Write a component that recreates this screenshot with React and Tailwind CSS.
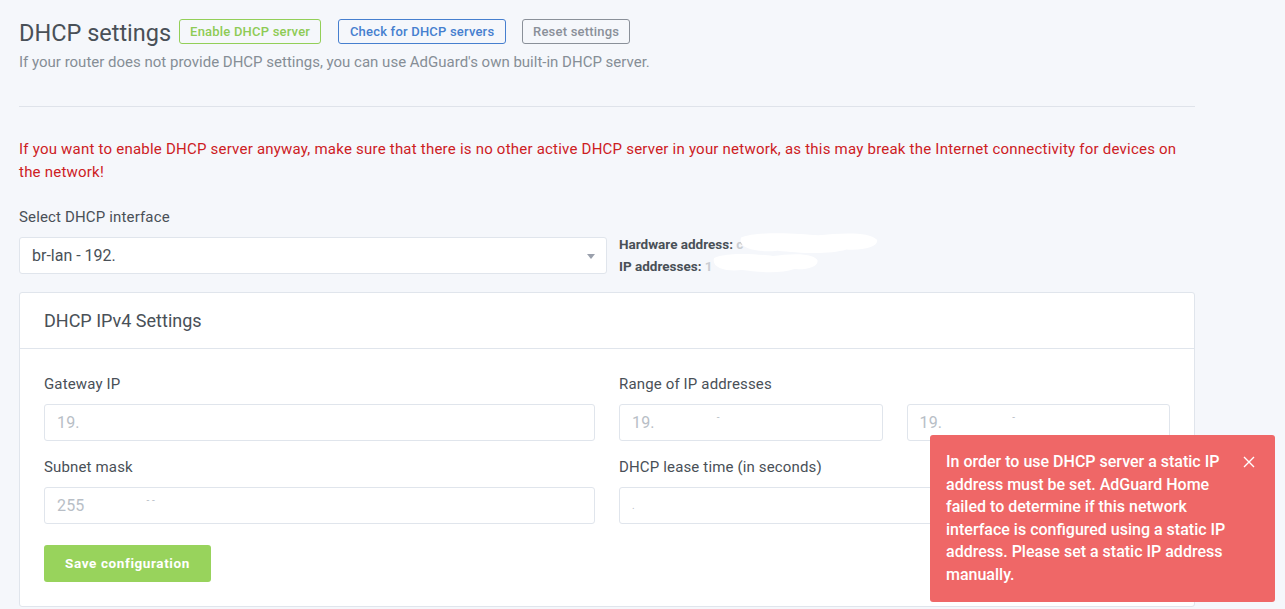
import React from "react";

const font = { fontFamily: "Roboto, 'Liberation Sans', sans-serif" };

function Blob({ className }) {
  return (
    <svg className={className} viewBox="0 0 140 22" preserveAspectRatio="none">
      <path d="M4 6 C20 0 60 2 80 4 C100 2 130 0 138 8 C140 14 126 18 108 17 C90 22 60 20 40 18 C20 20 0 16 4 6 Z" fill="#ffffff" />
    </svg>
  );
}

function Input({ children }) {
  return (
    <div className="relative h-[37px] w-full rounded-[3px] border border-[#e0e5ec] bg-white pl-[12px] flex items-center text-[16px] text-[#b8bec6]">
      {children}
    </div>
  );
}

export default function App() {
  return (
    <div style={font} className="relative min-h-[609px] w-[1285px] overflow-hidden bg-[#f5f7fb] text-[#495057]">
      <div className="w-[1176px] ml-[19px]">
        <div className="flex items-center mt-[19px] h-[25px]">
          <h1 className="text-[23.5px] leading-[25px] font-normal text-[#495057] translate-y-[2px]">DHCP settings</h1>
          <button className="ml-[8px] w-[142px] h-[25px] rounded-[3px] border border-[#93cf58] text-[13px] font-medium tracking-[0.2px] text-[#8ecb55] bg-transparent">Enable DHCP server</button>
          <button className="ml-[17px] w-[168px] h-[25px] rounded-[3px] border border-[#467fcf] text-[13px] font-medium tracking-[0.2px] text-[#467fcf] bg-transparent">Check for DHCP servers</button>
          <button className="ml-[16px] w-[108px] h-[25px] rounded-[3px] border border-[#8a9099] text-[13px] font-medium tracking-[0.2px] text-[#8a9099] bg-transparent">Reset settings</button>
        </div>
        <p className="mt-[9px] text-[15px] leading-[18px] text-[#868e96]">If your router does not provide DHCP settings, you can use AdGuard's own built-in DHCP server.</p>
        <hr className="mt-[35px] border-0 border-t border-[#dfe3ea]" />
        <p className="mt-[31px] text-[15px] leading-[23px] tracking-[0.22px] text-[#cd201f]">If you want to enable DHCP server anyway, make sure that there is no other active DHCP server in your network, as this may break the Internet connectivity for devices on the network!</p>
        <div className="mt-[23px] text-[15px] leading-[20px] tracking-[0.15px]">Select DHCP interface</div>
        <div className="mt-[10px] flex h-[37px]">
          <div className="relative w-[588px] h-[37px] rounded-[3px] border border-[#e0e5ec] bg-white flex items-center pl-[12px] text-[16px] text-[#495057]">
            br-lan - 192.
            <span className="absolute right-[11px] top-[16px] w-0 h-0 border-l-[4px] border-r-[4px] border-t-[5px] border-l-transparent border-r-transparent border-t-[#9aa0ac]" />
          </div>
          <div className="relative ml-[12px] text-[13.5px] font-bold leading-[22px] text-[#495057]">
            <div className="mt-[-4px]">Hardware address: <span className="text-[#c9ccd1]">c</span></div>
            <div>IP addresses: <span className="text-[#c9ccd1]">1</span></div>
            <Blob className="absolute left-[118px] top-[-6px] w-[142px] h-[24px]" />
            <Blob className="absolute left-[92px] top-[15px] w-[108px] h-[22px]" />
          </div>
        </div>

        <div className="mt-[18px] rounded-[3px] border border-[#e0e5ec] bg-white">
          <div className="h-[56px] border-b border-[#e0e5ec] px-[24px] flex items-center text-[18px] text-[#495057]">DHCP IPv4 Settings</div>
          <div className="px-[24px] pt-[25px] pb-[24px]">
            <div className="grid grid-cols-2 gap-x-[24px] text-[15px] leading-[20px] tracking-[0.15px]">
              <div>
                <div>Gateway IP</div>
                <div className="mt-[10px]"><Input>19.</Input></div>
              </div>
              <div>
                <div>Range of IP addresses</div>
                <div className="mt-[10px] grid grid-cols-2 gap-x-[24px]">
                  <Input>19.<span className="ml-[62px] text-[10px] -mt-[10px]">-</span></Input>
                  <Input>19.<span className="ml-[70px] text-[10px] -mt-[10px]">-</span></Input>
                </div>
              </div>
              <div className="mt-[16px]">
                <div>Subnet mask</div>
                <div className="mt-[10px]"><Input>255<span className="ml-[62px] text-[10px] -mt-[10px]">- -</span></Input></div>
              </div>
              <div className="mt-[16px]">
                <div>DHCP lease time (in seconds)</div>
                <div className="mt-[10px]"><Input><span className="text-[10px]">.</span></Input></div>
              </div>
            </div>
            <button className="mt-[21px] w-[167px] h-[37px] rounded-[3px] bg-[#98d35c] text-white text-[13.5px] font-bold tracking-[0.6px]">Save configuration</button>
          </div>
        </div>
      </div>

      <div className="absolute left-[930px] top-[435px] w-[345px] h-[167px] rounded-[3px] bg-[#ef6767] text-white flex pl-[16px] pt-[16px] pr-[20px]">
        <p className="w-[286px] text-[16px] font-medium leading-[22.5px]">In order to use DHCP server a static IP address must be set. AdGuard Home failed to determine if this network interface is configured using a static IP address. Please set a static IP address manually.</p>
        <svg className="ml-auto mt-[5px]" width="12" height="12" viewBox="0 0 12 12">
          <path d="M1 1 L11 11 M11 1 L1 11" stroke="#ffffff" strokeWidth="1.4" />
        </svg>
      </div>
    </div>
  );
}
